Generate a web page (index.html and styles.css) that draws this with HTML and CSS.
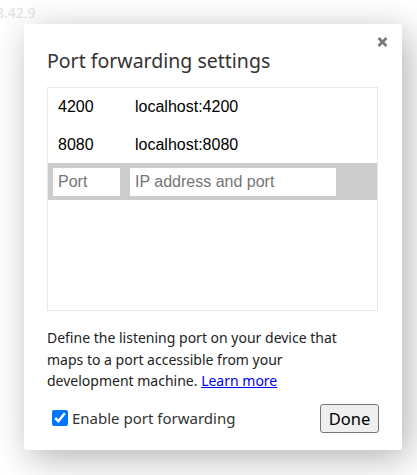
FILE: index.html
```html
<!DOCTYPE html>
<html>
<head>
<meta charset="utf-8">
<link rel="stylesheet" href="styles.css">
</head>
<body>
<div class="version">8.42.9</div>
<div class="dialog">
  <button class="close" aria-label="Close">
    <svg width="11" height="10" viewBox="0 0 11 10"><path d="M1.5 1L9.5 9M9.5 1L1.5 9" stroke="#777" stroke-width="2.6" stroke-linecap="butt"/></svg>
  </button>
  <h1 class="title">Port forwarding settings</h1>
  <div class="list">
    <div class="row"><span class="port">4200</span><span class="addr">localhost:4200</span></div>
    <div class="row"><span class="port">8080</span><span class="addr">localhost:8080</span></div>
    <div class="row edit">
      <input class="in-port" type="text" placeholder="Port">
      <input class="in-addr" type="text" placeholder="IP address and port">
    </div>
  </div>
  <p class="desc">Define the listening port on your device that maps to a port accessible from your development machine. <a href="#">Learn more</a></p>
  <div class="footer">
    <label class="check"><input type="checkbox" checked><span>Enable port forwarding</span></label>
    <button class="done">Done</button>
  </div>
</div>
</body>
</html>
```
FILE: styles.css
```css
html, body {
  margin: 0;
  padding: 0;
  background: #fff;
  overflow: hidden;
}
body {
  width: 417px;
  height: 475px;
  position: relative;
  padding: 24px 0 0 24px;
  box-sizing: border-box;
}
.version {
  position: absolute;
  left: -4px;
  top: 3px;
  font-family: "Noto Sans", sans-serif;
  font-size: 14px;
  color: #e2e2e2;
}
.dialog {
  position: relative;
  width: 378px;
  height: 426px;
  box-sizing: border-box;
  background: #fff;
  border-radius: 3px;
  box-shadow: 6px 8px 36px rgba(0,0,0,0.3);
  padding: 22px 24px 0 23px;
  display: flex;
  flex-direction: column;
  font-family: "Noto Sans", sans-serif;
  color: #222;
}
.close {
  position: absolute;
  right: 14px;
  top: 13px;
  border: 0;
  background: none;
  padding: 0;
  width: 11px;
  height: 10px;
  display: flex;
  align-items: center;
  justify-content: center;
}
.title {
  margin: 0;
  font-weight: 400;
  font-size: 19.5px;
  line-height: 30px;
  color: #333;
}
.list {
  margin-top: 11px;
  height: 224px;
  box-sizing: border-box;
  border: 1px solid #e8e8e8;
  font-family: "Liberation Sans", Arial, sans-serif;
  font-size: 16px;
  color: #000;
}
.row {
  height: 38px;
  display: flex;
  align-items: center;
  padding-left: 10px;
}
.row:nth-child(2) { height: 37px; }
.port { width: 77px; }
.row.edit {
  height: 37px;
  background: #cccccc;
  padding-left: 5px;
  gap: 10px;
}
.row.edit input {
  border: 0;
  outline: 0;
  height: 28px;
  box-sizing: border-box;
  padding: 0 5px;
  font-family: "Liberation Sans", Arial, sans-serif;
  font-size: 16px;
  background: #fff;
  margin: 0;
}
.row.edit input::placeholder { color: #757575; }
.in-port { width: 67px; }
.in-addr { width: 206px; }
.desc {
  margin: 16px 0 0;
  padding-right: 16px;
  font-size: 14px;
  line-height: 21.5px;
  color: #222;
}
.desc a { color: #0000ee; }
.footer {
  margin-top: 12px;
  display: flex;
  align-items: center;
  justify-content: space-between;
}
.check {
  display: flex;
  align-items: center;
  font-size: 15px;
  color: #333;
  padding-left: 5px;
}
.check input {
  width: 16px;
  height: 16px;
  margin: 0 4px 0 0;
}
.done {
  width: 59px;
  height: 29px;
  margin-right: -1px;
  background: #efefef;
  border: 1px solid #767676;
  border-radius: 3px;
  font-family: "Noto Sans", sans-serif;
  font-size: 16.5px;
  color: #000;
  padding: 0;
}
```
